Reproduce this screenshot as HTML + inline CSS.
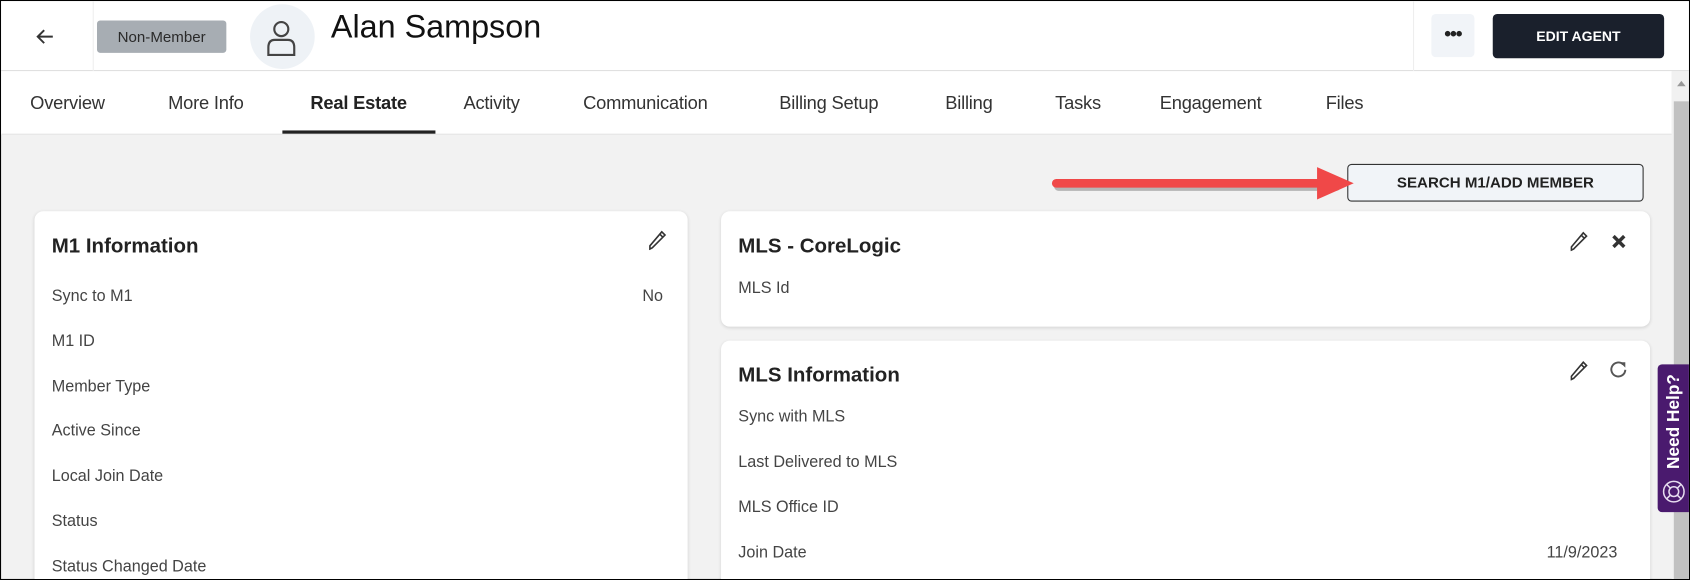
<!DOCTYPE html>
<html><head><meta charset="utf-8"><style>
*{box-sizing:border-box;margin:0;padding:0}
html,body{width:1690px;height:580px;overflow:hidden}
body{background:#fff;font-family:"Liberation Sans",sans-serif;color:#222}
#w{position:absolute;left:0;top:0;width:1568px;height:538px;transform-origin:0 0;transform:scale(1.0778,1.0781);background:#f2f2f2;overflow:hidden;border:1px solid #000}
.a{position:absolute}
.hdr{left:0;top:0;width:1568px;height:65px;background:#fff;border-bottom:1px solid #ddd}
.tabs{left:0;top:65px;width:1550px;height:59px;background:#fff;border-bottom:1px solid #e2e2e2}
.tab{position:absolute;top:20px;font-size:17px;color:#333;letter-spacing:-0.2px}
.card{background:#fff;border-radius:8px;box-shadow:0 1px 3px rgba(0,0,0,.12)}
.t{position:absolute;font-size:19px;font-weight:bold;color:#222}
.l{position:absolute;font-size:15px;color:#444}
</style></head><body><div id="w">
<div class="a hdr">
 <svg class="a" style="left:31px;top:23px" width="20" height="20" viewBox="0 0 20 20"><path d="M17 10H3M9 4L3 10l6 6" stroke="#333" stroke-width="1.8" fill="none"/></svg>
 <div class="a" style="left:85px;top:0;width:1px;height:65px;background:#eee"></div>
 <div class="a" style="left:89px;top:18px;width:120px;height:30px;background:#a7adb3;border-radius:3px;font-size:14px;color:#2a2a2a;text-align:center;line-height:30px">Non-Member</div>
 <div class="a" style="left:231px;top:3px;width:60px;height:60px;border-radius:50%;background:#eef2f6"></div>
 <svg class="a" style="left:245px;top:16px" width="30" height="36" viewBox="0 0 30 36"><circle cx="15" cy="10" r="6.5" stroke="#444" stroke-width="2" fill="none"/><path d="M3 34V27q0-7 6-7h12q6 0 6 7v7z" stroke="#444" stroke-width="2" fill="none"/></svg>
 <div class="a" style="left:306px;top:8px;font-size:30px;color:#111">Alan Sampson</div>
 <div class="a" style="left:1310px;top:0;width:1px;height:65px;background:#eee"></div>
 <div class="a" style="left:1327px;top:12px;width:40px;height:40px;background:#f1f4f8;border-radius:4px;text-align:center;line-height:36px;font-size:18px;font-weight:bold;letter-spacing:-1px">•••</div>
 <div class="a" style="left:1384px;top:12px;width:159px;height:41px;background:#1a202c;border-radius:4px;color:#fff;font-size:13px;font-weight:bold;text-align:center;line-height:41px">EDIT AGENT</div>
</div>
<div class="a tabs">
 <span class="tab" style="left:27px">Overview</span>
 <span class="tab" style="left:155px">More Info</span>
 <span class="tab" style="left:287px;font-weight:bold;color:#222">Real Estate</span>
 <span class="tab" style="left:429px">Activity</span>
 <span class="tab" style="left:540px">Communication</span>
 <span class="tab" style="left:722px">Billing Setup</span>
 <span class="tab" style="left:876px">Billing</span>
 <span class="tab" style="left:978px">Tasks</span>
 <span class="tab" style="left:1075px">Engagement</span>
 <span class="tab" style="left:1229px">Files</span>
 <div class="a" style="left:261px;top:55px;width:142px;height:3px;background:#222"></div>
</div>
<div class="a" style="left:1550px;top:65px;width:18px;height:473px;background:#f1f1f1"></div>
<div class="a" style="left:1552px;top:93px;width:16px;height:445px;background:#c1c1c1"></div>
<svg class="a" style="left:1554px;top:72px" width="10" height="8"><path d="M1 7L5 2l4 5z" fill="#999"/></svg>
<div class="a" style="left:1249px;top:151px;width:275px;height:35px;border:1px solid #333;border-radius:4px;background:#f1f4f8;font-size:14px;font-weight:bold;text-align:center;line-height:33px">SEARCH M1/ADD MEMBER</div>
<svg class="a" style="left:965px;top:150px" width="300" height="40"><line x1="14" y1="19" x2="272" y2="19" stroke="rgba(0,0,0,.25)" stroke-width="8" stroke-linecap="round" transform="translate(2,3)"/><line x1="14" y1="19" x2="260" y2="19" stroke="#f04848" stroke-width="8" stroke-linecap="round"/><path d="M256 4L290 19L256 34z" fill="#f04848"/></svg>
<div class="a card" style="left:31px;top:195px;width:606px;height:350px">
 <div class="t" style="left:16px;top:22px">M1 Information</div>
 <svg class="a" style="left:569px;top:16px" width="18" height="20" viewBox="0 0 18 20"><path d="M4 18L2 19l0-3L13 3l3 3L5 17zM11 5l3 3" stroke="#333" stroke-width="1.5" fill="none"/></svg>
 <div class="l" style="left:16px;top:70px">Sync to M1</div><div class="l" style="left:564px;top:70px">No</div>
 <div class="l" style="left:16px;top:112px">M1 ID</div>
 <div class="l" style="left:16px;top:154px">Member Type</div>
 <div class="l" style="left:16px;top:195px">Active Since</div>
 <div class="l" style="left:16px;top:237px">Local Join Date</div>
 <div class="l" style="left:16px;top:279px">Status</div>
 <div class="l" style="left:16px;top:321px">Status Changed Date</div>
</div>
<div class="a card" style="left:668px;top:195px;width:862px;height:107px">
 <div class="t" style="left:16px;top:22px">MLS - CoreLogic</div>
 <svg class="a" style="left:787px;top:17px" width="18" height="20" viewBox="0 0 18 20"><path d="M4 18L2 19l0-3L13 3l3 3L5 17zM11 5l3 3" stroke="#333" stroke-width="1.5" fill="none"/></svg>
 <svg class="a" style="left:826px;top:21px" width="14" height="14"><path d="M2 2L12 12M12 2L2 12" stroke="#333" stroke-width="3.2"/></svg>
 <div class="l" style="left:16px;top:63px">MLS Id</div>
</div>
<div class="a card" style="left:668px;top:315px;width:862px;height:230px">
 <div class="t" style="left:16px;top:22px">MLS Information</div>
 <svg class="a" style="left:787px;top:17px" width="18" height="20" viewBox="0 0 18 20"><path d="M4 18L2 19l0-3L13 3l3 3L5 17zM11 5l3 3" stroke="#333" stroke-width="1.5" fill="none"/></svg>
 <svg class="a" style="left:824px;top:18px" width="18" height="18" viewBox="0 0 18 18"><path d="M13 4A6.5 6.5 0 1 0 15 9" stroke="#555" stroke-width="1.8" fill="none"/><path d="M10 2h5v5z" fill="#555"/></svg>
 <div class="l" style="left:16px;top:62px">Sync with MLS</div>
 <div class="l" style="left:16px;top:104px">Last Delivered to MLS</div>
 <div class="l" style="left:16px;top:146px">MLS Office ID</div>
 <div class="l" style="left:16px;top:188px">Join Date</div><div class="l" style="left:766px;top:188px">11/9/2023</div>
</div>
<div class="a" style="left:1537px;top:337px;width:31px;height:137px;background:#4a1a6e;border-radius:4px 0 0 4px"></div>
<div class="a" style="left:1537px;top:337px;width:31px;height:105px;display:flex;align-items:center;justify-content:center"><div style="transform:rotate(-90deg);white-space:nowrap;color:#fff;font-weight:bold;font-size:16px">Need Help?</div></div>
<svg class="a" style="left:1541px;top:444px" width="22" height="22" viewBox="0 0 22 22"><g stroke="#e6dcef" stroke-width="1.4" fill="none"><circle cx="11" cy="11" r="9.5"/><circle cx="11" cy="11" r="4.5"/><path d="M4.3 4.3l3.5 3.5M17.7 4.3l-3.5 3.5M4.3 17.7l3.5-3.5M17.7 17.7l-3.5-3.5"/></g></svg>
</div></body></html>
